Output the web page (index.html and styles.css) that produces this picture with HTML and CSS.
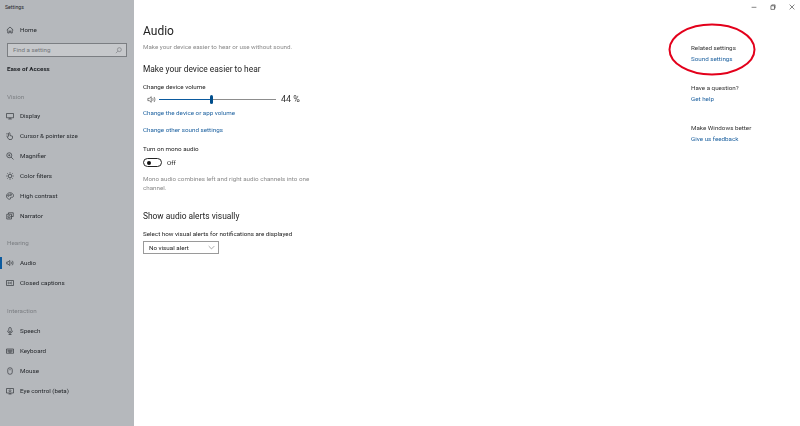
FILE: index.html
```html
<!DOCTYPE html>
<html>
<head>
    <meta charset='UTF-8'>
    <title>Settings</title>
    <link rel="stylesheet" href="styles.css">
</head>
<body>
    <div class='window'>
        <nav class='sidebar'>
            <div class='app-title'>Settings</div>
            <a class='nav-item home'>
                <svg class='icon' viewBox='0 0 16 16'><path d='M1.500 8 8 2l6.500 6M3.500 7v7h3v-4h3v4h3V7'/></svg>
                Home
            </a>
            <div class='search'>
                <span>Find a setting</span>
                <svg viewBox='0 0 16 16'><circle cx='10' cy='6' r='4.500'/><path d='M6.500 9.500 2 14'/></svg>
            </div>
            <div class='category'>Ease of Access</div>

            <div class='group-label vision'>Vision</div>
            <a class='nav-item'>
                <svg class='icon' viewBox='0 0 16 16'><path d='M1 3h14v8.500H1zM8 11.500V14M4.500 14h7'/></svg>
                Display
            </a>
            <a class='nav-item'>
                <svg class='icon' viewBox='0 0 16 16'><path d='M5 8V2.500l1.500-1L8 2.500V7l5 1.500V12l-2 3H6L2 9.500 3.500 8 5 9.500M1 2l2 2M1 6h2'/></svg>
                Cursor &amp; pointer size
            </a>
            <a class='nav-item'>
                <svg class='icon' viewBox='0 0 16 16'><circle cx='6.500' cy='6.500' r='5'/><path d='M10 10l5 5M4.500 6.500h4M6.500 4.500v4'/></svg>
                Magnifier
            </a>
            <a class='nav-item'>
                <svg class='icon' viewBox='0 0 16 16'><circle cx='8' cy='8' r='3.500'/><path d='M8 0.500v2.500M8 13v2.500M0.500 8H3M13 8h2.500M2.700 2.700l1.800 1.800M11.500 11.500l1.800 1.800M2.700 13.300l1.800-1.800M11.500 4.500l1.800-1.800'/></svg>
                Color filters
            </a>
            <a class='nav-item'>
                <svg class='icon' viewBox='0 0 16 16'><path d='M8 1.500c4 0 7 2.500 7 6 0 2.500-2 3.500-4 3-1.500-.4-2.500.5-2 2 .4 1.200-.2 2-1.500 2C4 14.500 1 11.500 1 8s3-6.500 7-6.500z'/><circle cx='5' cy='7' r='1.500'/><circle cx='9.500' cy='5.500' r='1.500'/></svg>
                High contrast
            </a>
            <a class='nav-item'>
                <svg class='icon' viewBox='0 0 16 16'><path d='M5 4V1.500h9.500V9H11M1.500 4.500H11V14H1.500zM4 9.500a2.300 2.300 0 1 0 4.600 0 2.300 2.300 0 1 0-4.600 0'/></svg>
                Narrator
            </a>

            <div class='group-label hearing'>Hearing</div>
            <a class='nav-item active'>
                <svg class='icon' viewBox='0 0 16 16'><path d='M1.500 6v4h2.500l3.500 3V3L4 6zM10 5.500c1 1.500 1 3.500 0 5M12.500 3.500c2 2.500 2 6.500 0 9'/></svg>
                Audio
            </a>
            <a class='nav-item'>
                <svg class='icon' viewBox='0 0 16 16'><path d='M1 3h14v10H1zM7 7c-1-1.200-3-.8-3 1s2 2.200 3 1M12 7c-1-1.200-3-.8-3 1s2 2.200 3 1'/></svg>
                Closed captions
            </a>

            <div class='group-label interaction'>Interaction</div>
            <a class='nav-item'>
                <svg class='icon' viewBox='0 0 16 16'><rect x='5.500' y='1' width='5' height='9' rx='2.500'/><path d='M3 7.500c0 6 10 6 10 0M8 12.500V15M5 15h6'/></svg>
                Speech
            </a>
            <a class='nav-item'>
                <svg class='icon' viewBox='0 0 16 16'><path d='M1 4h14v8.500H1zM3 6.500h10M3 8.500h10M5 10.500h6'/></svg>
                Keyboard
            </a>
            <a class='nav-item'>
                <svg class='icon' viewBox='0 0 16 16'><rect x='3.500' y='1.500' width='9' height='13' rx='4'/><path d='M8 3.500v3'/></svg>
                Mouse
            </a>
            <a class='nav-item'>
                <svg class='icon' viewBox='0 0 16 16'><path d='M1 3h14v9H1zM8 12v2M5 14h6M5.500 7.500c1.500-2 3.500-2 5 0-1.500 2-3.500 2-5 0z'/></svg>
                Eye control (beta)
            </a>
        </nav>

        <main class='content'>
            <div class='window-controls'>
                <svg viewBox='0 0 10 10'><path d='M1 5.500h8'/></svg>
                <svg viewBox='0 0 10 10'><path d='M1.500 3h6v6h-6zM3 3V1.500h5.500V7H7.500'/></svg>
                <svg viewBox='0 0 10 10'><path d='M1 1l8 8M9 1 1 9'/></svg>
            </div>

            <div class='columns'>
                <section class='settings'>
                    <h1>Audio</h1>
                    <p class='muted intro'>Make your device easier to hear or use without sound.</p>

                    <h2 class='hear-title'>Make your device easier to hear</h2>
                    <label class='volume-label'>Change device volume</label>
                    <div class='volume-row'>
                        <svg viewBox='0 0 16 16'><path d='M1.500 6v4h2.500l3.500 3V3L4 6zM10 5.500c1 1.500 1 3.500 0 5M12.500 3.500c2 2.500 2 6.500 0 9'/></svg>
                        <div class='slider'><div class='slider-fill'></div><div class='slider-thumb'></div></div>
                        <span class='volume-value'>44 %</span>
                    </div>
                    <a class='link device-link'>Change the device or app volume</a>
                    <a class='link other-link'>Change other sound settings</a>

                    <label class='mono-label'>Turn on mono audio</label>
                    <div class='toggle-row'>
                        <div class='toggle'><div class='toggle-dot'></div></div>
                        <span>Off</span>
                    </div>
                    <p class='muted mono-note'>Mono audio combines left and right audio channels into one channel.</p>

                    <h2 class='alerts-title'>Show audio alerts visually</h2>
                    <label class='alert-label'>Select how visual alerts for notifications are displayed</label>
                    <div class='dropdown'>
                        <span>No visual alert</span>
                        <svg viewBox='0 0 10 10'><path d='M1 3l4 4 4-4'/></svg>
                    </div>
                </section>

                <aside class='related'>
                    <div class='related-block'>
                        <div>Related settings</div>
                        <a class='link'>Sound settings</a>
                    </div>
                    <div class='related-block'>
                        <div>Have a question?</div>
                        <a class='link'>Get help</a>
                    </div>
                    <div class='related-block'>
                        <div>Make Windows better</div>
                        <a class='link'>Give us feedback</a>
                    </div>
                </aside>
            </div>
        </main>

        <svg class='red-circle' viewBox='0 0 88 53'><ellipse cx='44' cy='26.500' rx='42.500' ry='25'/></svg>
    </div>
</body>
</html>
```

FILE: styles.css
```css
html, body {
    margin: 0;
    padding: 0;
    width: 800px;
    height: 426px;
    overflow: hidden;
    background: white;
    font-family: 'Roboto', sans-serif;
    font-size: 6.25px;
    color: #222;
}

.window {
    position: relative;
    display: flex;
    width: 800px;
    height: 426px;
    filter: blur(0.3px);
}

a, label, p, h1, h2 {
    display: block;
    margin: 0;
}

/* Sidebar */
.sidebar {
    box-sizing: border-box;
    width: 134px;
    height: 426px;
    flex-shrink: 0;
    background: #b5b8bc;
    color: #25282c;
}

.app-title {
    height: 14px;
    line-height: 14px;
    padding-left: 5px;
    font-size: 5.2px;
}

.nav-item {
    display: flex;
    align-items: center;
    gap: 6px;
    height: 20px;
    padding-left: 6px;
    position: relative;
}

.home {
    margin-top: 5.500px;
}

.icon {
    width: 8px;
    height: 8px;
    flex-shrink: 0;
    fill: none;
    stroke: #2c3035;
    stroke-width: 1.3;
}

.active::before {
    content: '';
    position: absolute;
    left: 0;
    top: 4px;
    width: 2px;
    height: 12px;
    background: #0b5a9e;
}

.search {
    box-sizing: border-box;
    display: flex;
    align-items: center;
    justify-content: space-between;
    width: 120px;
    height: 14px;
    margin: 3.500px 0 0 7px;
    padding: 0 4px 0 5px;
    background: #c6c8cb;
    border: 1px solid #7b7e82;
    color: #73767a;
}

.search svg {
    width: 7px;
    height: 7px;
    fill: none;
    stroke: #6d7074;
    stroke-width: 1.3;
}

.category {
    margin: 7px 0 0 7px;
    height: 10px;
    line-height: 10px;
    font-weight: 700;
    color: #1d2024;
}

.group-label {
    height: 10px;
    line-height: 10px;
    padding-left: 7px;
    color: #7c7f83;
}

.vision {
    margin-top: 18px;
    margin-bottom: 4px;
}

.hearing {
    margin-top: 12px;
    margin-bottom: 5px;
}

.interaction {
    margin-top: 13px;
    margin-bottom: 5px;
}

/* Main area */
.content {
    flex: 1;
    min-width: 0;
}

.window-controls {
    display: flex;
    justify-content: flex-end;
    gap: 13px;
    height: 12px;
    padding-right: 5px;
}

.window-controls svg {
    width: 6px;
    height: 6px;
    margin-top: 3.500px;
    fill: none;
    stroke: #333;
    stroke-width: 1;
}

.columns {
    display: flex;
    padding-left: 9px;
}

.settings {
    width: 548px;
    flex-shrink: 0;
}

h1 {
    margin-top: 10px;
    height: 18px;
    line-height: 18px;
    font-size: 12px;
    font-weight: 400;
    color: #222;
}

h2 {
    height: 13px;
    line-height: 13px;
    font-size: 8.4px;
    font-weight: 400;
    color: #222;
}

.muted {
    color: #8a8a8a;
}

.intro {
    margin-top: 3px;
    height: 9px;
    line-height: 9px;
}

.hear-title {
    margin-top: 11px;
}

.volume-label {
    margin-top: 7px;
    height: 9px;
    line-height: 9px;
}

.volume-row {
    display: flex;
    align-items: center;
    height: 12px;
    margin-top: 1px;
}

.volume-row svg {
    width: 9px;
    height: 9px;
    margin: 0 0 0 3.500px;
    fill: none;
    stroke: #444;
    stroke-width: 1.2;
}

.slider {
    position: relative;
    width: 117px;
    height: 1px;
    margin-left: 3.500px;
    background: #8d8d8d;
}

.slider-fill {
    width: 45%;
    height: 1px;
    background: #0b5a9e;
}

.slider-thumb {
    position: absolute;
    left: 51px;
    top: -4px;
    width: 3px;
    height: 9px;
    border-radius: 1.500px;
    background: #004e8c;
}

.volume-value {
    margin-left: 5px;
    font-size: 9px;
    color: #333;
}

.link {
    color: #1a5f9e;
}

.device-link {
    margin-top: 4px;
    height: 9px;
    line-height: 9px;
}

.other-link {
    margin-top: 8px;
    height: 9px;
    line-height: 9px;
}

.mono-label {
    margin-top: 10px;
    height: 9px;
    line-height: 9px;
}

.toggle-row {
    display: flex;
    align-items: center;
    gap: 5px;
    height: 9px;
    margin-top: 4px;
}

.toggle {
    box-sizing: border-box;
    display: flex;
    align-items: center;
    width: 19px;
    height: 9px;
    padding-left: 2.500px;
    border: 1px solid #222;
    border-radius: 5px;
}

.toggle-dot {
    width: 4px;
    height: 4px;
    border-radius: 50%;
    background: #111;
}

.mono-note {
    width: 180px;
    margin-top: 8px;
    line-height: 9px;
}

.alerts-title {
    margin-top: 17px;
}

.alert-label {
    margin-top: 7px;
    height: 9px;
    line-height: 9px;
}

.dropdown {
    box-sizing: border-box;
    display: flex;
    align-items: center;
    justify-content: space-between;
    width: 76px;
    height: 13px;
    margin-top: 2px;
    padding: 0 3px 0 5px;
    border: 1px solid #9a9a9a;
}

.dropdown svg {
    width: 7px;
    height: 7px;
    fill: none;
    stroke: #777;
    stroke-width: 0.9;
}

/* Related settings column */
.related {
    padding-top: 30.500px;
    color: #333;
}

.related-block {
    line-height: 11px;
    margin-bottom: 18px;
}

/* Red hand-drawn annotation */
.red-circle {
    position: absolute;
    left: 668px;
    top: 23px;
    width: 88px;
    height: 53px;
    fill: none;
    stroke: #e3001b;
    stroke-width: 2;
}
```
